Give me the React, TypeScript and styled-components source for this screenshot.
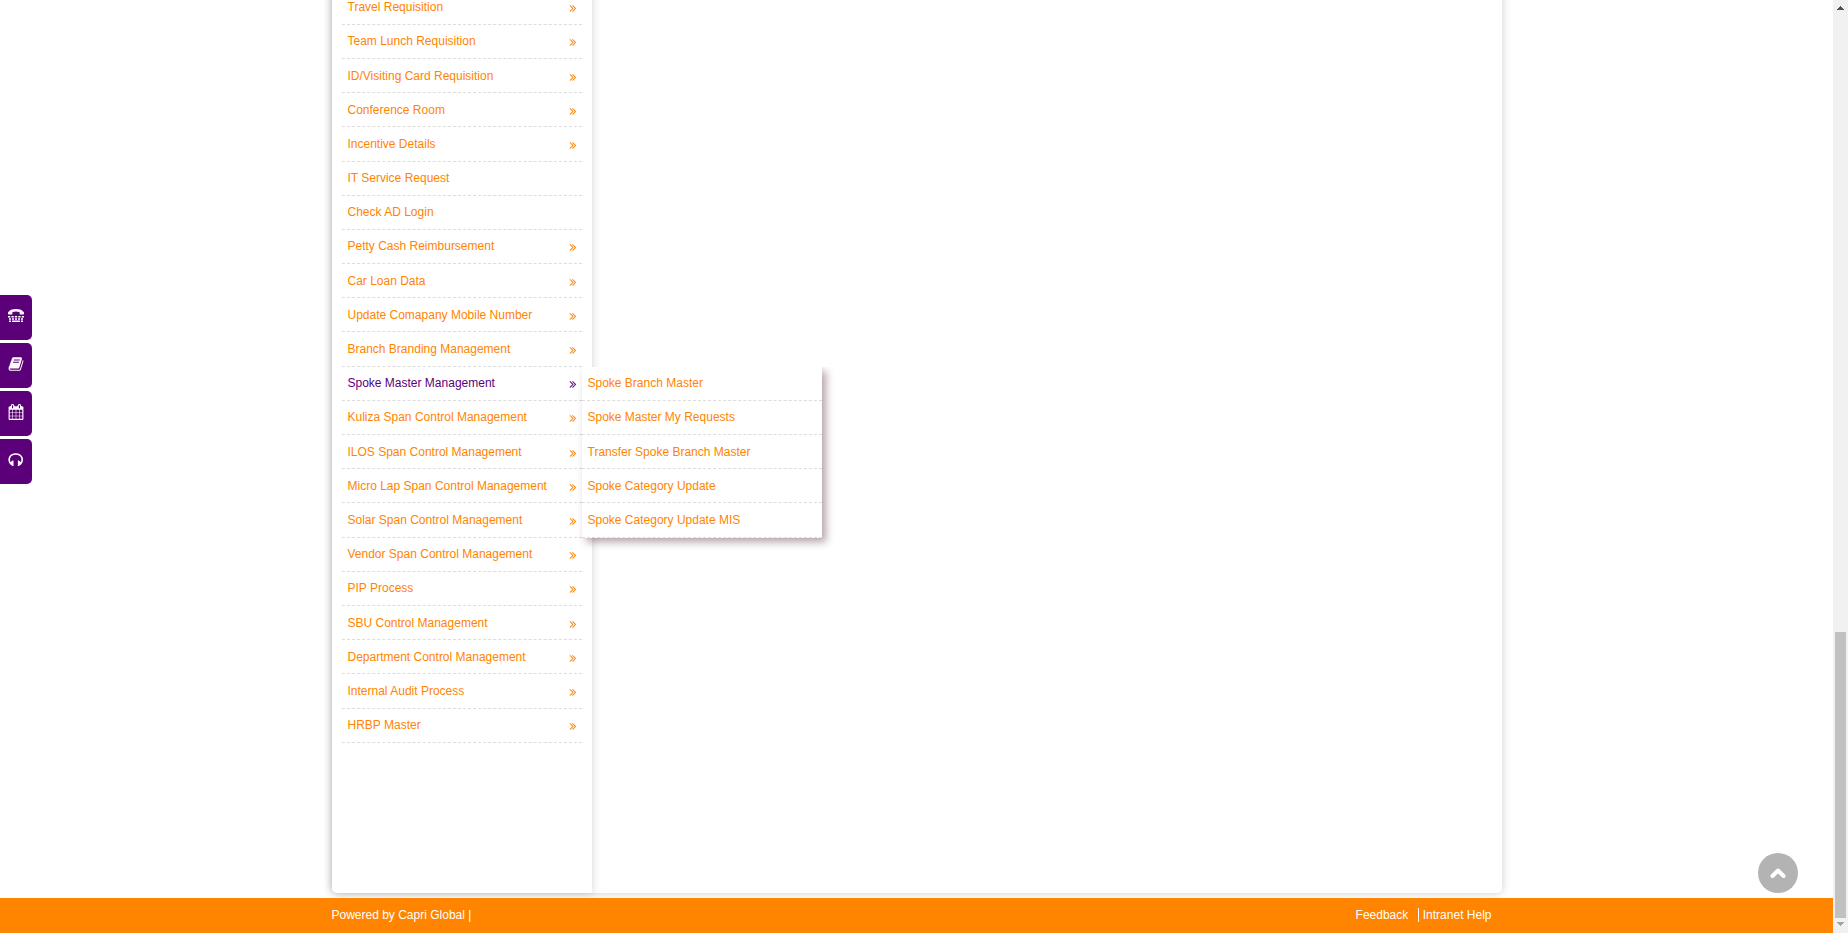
import React from 'react';
import styled, { createGlobalStyle } from 'styled-components';

const Global = createGlobalStyle`
  * { box-sizing: border-box; }
  body { margin: 0; background: #fff; font: 12px/17px "Liberation Sans", Arial, sans-serif; overflow: hidden; }
  ul { list-style: none; margin: 0; padding: 0; }
  a { color: inherit; text-decoration: none; }
`;

const Screen = styled.div`
  display: flex;
  height: 933px;
  overflow: hidden;
`;
const Page = styled.div`
  flex: 1;
  display: flex;
  flex-direction: column;
`;
const Main = styled.main`
  height: 898px;
  overflow: hidden;
  display: flex;
  justify-content: center;
  padding: 0 0 5px 1px;
`;
const Panel = styled.div`
  width: 1170px;
  margin-top: -20px;
  display: flex;
  background: #fff;
  border-radius: 0 0 5px 5px;
  box-shadow: 0 0 10px rgba(0, 0, 0, 0.2);
`;
const Sidebar = styled.nav`
  width: 260px;
  padding: 10.6px 10px 0;
  background: #fff;
  border-radius: 0 0 0 5px;
  box-shadow: 0 0 10px rgba(0, 0, 0, 0.18);
`;
const Item = styled.li<{ $active?: boolean }>`
  position: relative;
  height: 34.1875px;
  padding: 8.55px 5px 0 5.5px;
  display: flex;
  justify-content: space-between;
  border-bottom: 1px dashed #ddd;
  color: ${(p) => (p.$active ? '#5b0079' : '#ff8400')};
`;
const Arrow = styled.svg`
  width: 12px;
  height: 12px;
  margin: 3px -1.9px 0 0;
`;
const Flyout = styled.ul`
  position: absolute;
  left: 240px;
  top: 0;
  width: 240px;
  z-index: 5;
  background: #fff;
  clip-path: inset(0.3px -16px -16px -16px);
  box-shadow: 4px 4px 8px rgba(60, 15, 20, 0.38);
`;
const Footer = styled.footer`
  height: 35px;
  background: #ff8400;
  color: #fff;
  display: flex;
  justify-content: center;
`;
const FooterInner = styled.div`
  width: 1170px;
  padding: 9px 10px 0 0;
  display: flex;
  justify-content: space-between;
`;
const FooterLinks = styled.div`
  display: flex;
  a + a { margin-left: 9.5px; padding-left: 4px; border-left: 1px solid #fff; height: 14px; margin-top: 1px; line-height: 15px; }
`;
const Scrollbar = styled.div`
  width: 15px;
  background: #f1f1f1;
  display: flex;
  flex-direction: column;
  align-items: center;
  justify-content: space-between;
  padding: 6px 0 7px;
`;
const Thumb = styled.div`
  width: 11px;
  height: 286px;
  margin: auto 0 4px;
  background: #c1c1c1;
`;
const Caret = styled.svg`
  width: 7px;
  height: 4px;
  display: block;
`;
const SideTabs = styled.div`
  position: fixed;
  left: 0;
  top: 295px;
  display: grid;
  gap: 3px;
`;
const Tab = styled.a`
  width: 32px;
  height: 45px;
  border-radius: 0 5px 5px 0;
  background: #5b0079;
  color: #fff;
  padding: 13px 0 0 8px;
  svg { width: 16px; height: 16px; display: block; }
`;
const BackToTop = styled.a`
  position: fixed;
  left: 1758px;
  top: 853px;
  width: 40px;
  height: 40px;
  border-radius: 50%;
  background: #b3b3b3;
  display: grid;
  place-items: center;
`;

const items = [
  'Travel Requisition', 'Team Lunch Requisition', 'ID/Visiting Card Requisition', 'Conference Room',
  'Incentive Details', 'IT Service Request', 'Check AD Login', 'Petty Cash Reimbursement', 'Car Loan Data',
  'Update Comapany Mobile Number', 'Branch Branding Management', 'Spoke Master Management',
  'Kuliza Span Control Management', 'ILOS Span Control Management', 'Micro Lap Span Control Management',
  'Solar Span Control Management', 'Vendor Span Control Management', 'PIP Process', 'SBU Control Management',
  'Department Control Management', 'Internal Audit Process', 'HRBP Master',
];
const leaves = ['IT Service Request', 'Check AD Login'];
const submenu = [
  'Spoke Branch Master', 'Spoke Master My Requests', 'Transfer Spoke Branch Master',
  'Spoke Category Update', 'Spoke Category Update MIS',
];

const DoubleAngle = () => (
  <Arrow viewBox="0 0 1792 1792" fill="currentColor" stroke="currentColor" strokeWidth="15">
    <path d="M979 960q0 13-10 23l-466 466q-10 10-23 10t-23-10l-50-50q-10-10-10-23t10-23l393-393-393-393q-10-10-10-23t10-23l50-50q10-10 23-10t23 10l466 466q10 10 10 23zm384 0q0 13-10 23l-466 466q-10 10-23 10t-23-10l-50-50q-10-10-10-23t10-23l393-393-393-393q-10-10-10-23t10-23l50-50q10-10 23-10t23 10l466 466q10 10 10 23z" />
  </Arrow>
);

const Phone = () => (
  <svg viewBox="0 0 16 16" fill="currentColor">
    <path d="M0 5.800V4.500C1.500 2 4 1 8 1s6.500 1 8 3.500v1.300q0 .7-.7.700h-3q-.7 0-.7-.7V4Q8 3.200 4.400 4v1.800q0 .7-.7.700H.7Q0 6.500 0 5.800z" />
    <path d="M0 8h2.300v1.500H0zM3.400 8h2.300v1.500H3.400zM6.800 8h2.400v1.500H6.800zM10.300 8h2.300v1.500h-2.300zM13.700 8H16v1.500h-2.300zM1 10.200h2v1.500H1zM4 10.200h2v1.500H4zM7 10.200h2v1.500H7zM10 10.200h2v1.500h-2zM13 10.200h2v1.500h-2zM1 12.400h2v1.500H1zM4 12.400h8v1.500H4zM13 12.400h2v1.500h-2z" />
  </svg>
);
const Book = () => (
  <svg viewBox="0 0 1792 1792" fill="currentColor">
    <path d="M1703 478q40 57 18 129l-275 906q-19 64-76.500 107.500t-122.500 43.500h-923q-77 0-148.500-53.500t-99.500-131.500q-24-67-2-127 0-4 3-27t4-37q1-8-3-21.500t-3-19.500q2-11 8-21t16.500-23.500 16.500-23.500q23-38 45-91.500t30-91.500q3-10 .5-30t-.5-28q3-11 17-28t17-23q21-36 42-92t25-90q1-9-2.500-32t.5-28q4-13 22-30.500t22-22.500q19-26 42.500-84.500t27.500-96.500q1-8-3-25.500t-2-26.500q2-8 9-18t18-23 17-21q8-12 16.500-30.500t15-35 16-36 19.500-32 26.500-23.500 36-11.500 47.500 5.500l-1 3q38-9 51-9h761q74 0 114 56t18 130l-274 906q-36 119-71.500 153.500t-128.500 34.500h-869q-27 0-38 15-11 16-1 43 24 70 144 70h923q29 0 56-15.500t35-41.500l300-987q7-22 5-57 38 15 59 43zm-1064 2q-4 13 2 22.500t20 9.500h608q13 0 25.500-9.500t16.500-22.500l21-64q4-13-2-22.500t-20-9.500h-608q-13 0-25.500 9.500t-16.500 22.500zm-83 256q-4 13 2 22.500t20 9.500h608q13 0 25.500-9.500t16.500-22.500l21-64q4-13-2-22.500t-20-9.500h-608q-13 0-25.500 9.500t-16.500 22.500z" />
  </svg>
);
const Calendar = () => (
  <svg viewBox="0 0 1792 1792" fill="currentColor">
    <path d="M192 1664h288v-288h-288v288zm352 0h320v-288h-320v288zm-352-352h288v-320h-288v320zm352 0h320v-320h-320v320zm-352-384h288v-288h-288v288zm736 736h320v-288h-320v288zm-384-736h320v-288h-320v288zm768 736h288v-288h-288v288zm-384-352h320v-320h-320v320zm-352-864v-288q0-13-9.500-22.500t-22.500-9.500h-64q-13 0-22.500 9.500t-9.500 22.500v288q0 13 9.500 22.500t22.500 9.500h64q13 0 22.500-9.500t9.500-22.500zm736 864h288v-320h-288v320zm-384-384h320v-288h-320v288zm384 0h288v-288h-288v288zm32-480v-288q0-13-9.500-22.500t-22.500-9.500h-64q-13 0-22.500 9.500t-9.500 22.500v288q0 13 9.500 22.500t22.500 9.500h64q13 0 22.500-9.500t9.500-22.500zm384-64v1280q0 52-38 90t-90 38h-1408q-52 0-90-38t-38-90v-1280q0-52 38-90t90-38h128v-96q0-66 47-113t113-47h64q66 0 113 47t47 113v96h384v-96q0-66 47-113t113-47h64q66 0 113 47t47 113v96h128q52 0 90 38t38 90z" />
  </svg>
);
const Headphones = () => (
  <svg viewBox="0 0 16 16">
    <path d="M2.800 12C-.5 7.500 1.500 2 7.700 2S15.900 7.500 12.600 12" fill="none" stroke="currentColor" strokeWidth="1.600" />
    <path d="M2.400 10.300 4.600 8.500h.9v5.600h-1L2.400 12.600zM13 10.300 10.800 8.500h-.9v5.600h1l2.100-1.500z" fill="currentColor" />
  </svg>
);

export default function App() {
  return (
    <Screen>
      <Global />
      <Page>
        <Main>
          <Panel>
            <Sidebar>
              <ul>
                {items.map((label) => {
                  const active = label === 'Spoke Master Management';
                  return (
                    <Item key={label} $active={active}>
                      <a>{label}</a>
                      {!leaves.includes(label) && <DoubleAngle />}
                      {active && (
                        <Flyout>
                          {submenu.map((entry) => (
                            <Item key={entry}><a>{entry}</a></Item>
                          ))}
                        </Flyout>
                      )}
                    </Item>
                  );
                })}
              </ul>
            </Sidebar>
          </Panel>
        </Main>
        <Footer>
          <FooterInner>
            <span>Powered by Capri Global |</span>
            <FooterLinks>
              <a>Feedback</a>
              <a>Intranet Help</a>
            </FooterLinks>
          </FooterInner>
        </Footer>
      </Page>
      <Scrollbar>
        <Caret viewBox="0 0 7 4" shapeRendering="crispEdges"><path d="M3 0h1v1h1v1h1v1h1v1H0V3h1V2h1V1h1z" fill="#505050" /></Caret>
        <Thumb />
        <Caret viewBox="0 0 7 4" shapeRendering="crispEdges"><path d="M0 0h7v1H6v1H5v1H4v1H3V3H2V2H1V1H0z" fill="#a3a3a3" /></Caret>
      </Scrollbar>
      <SideTabs>
        <Tab><Phone /></Tab>
        <Tab><Book /></Tab>
        <Tab><Calendar /></Tab>
        <Tab><Headphones /></Tab>
      </SideTabs>
      <BackToTop>
        <svg width="16" height="12" viewBox="0 0 16 12" fill="none" stroke="#fff" strokeWidth="4" strokeLinecap="round" strokeLinejoin="round">
          <path d="M2.500 9 8 3.500 13.500 9" />
        </svg>
      </BackToTop>
    </Screen>
  );
}
